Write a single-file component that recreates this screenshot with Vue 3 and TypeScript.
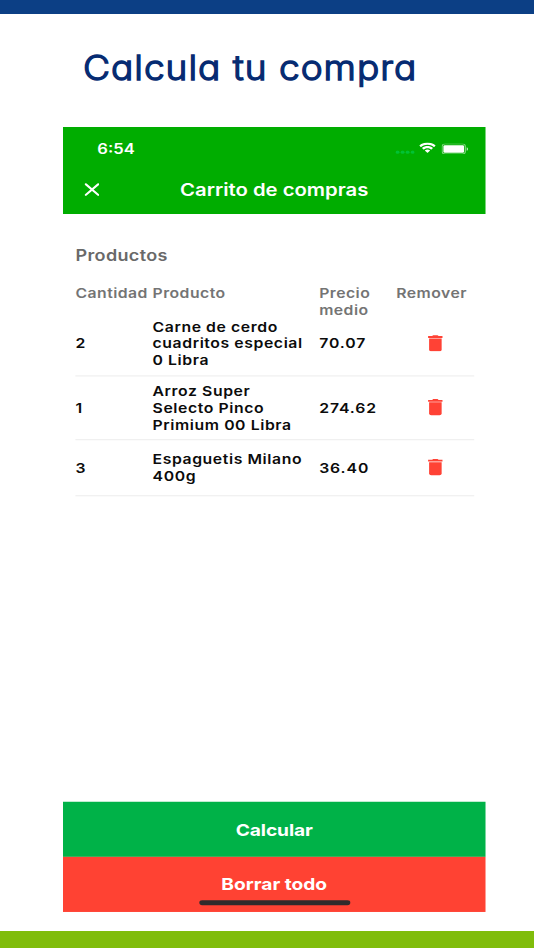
<script setup lang="ts">
interface Product {
  quantity: number
  lines: string[]
  price: string
  size: string
}

const products: Product[] = [
  { quantity: 2, lines: ['Carne de cerdo', 'cuadritos especial', '0 Libra'], price: '70.07', size: 'first' },
  { quantity: 1, lines: ['Arroz Super', 'Selecto Pinco', 'Primium 00 Libra'], price: '274.62', size: 'tall' },
  { quantity: 3, lines: ['Espaguetis Milano', '400g'], price: '36.40', size: 'short' },
]
</script>

<template>
  <main class="poster">
    <div class="band band-top"></div>
    <h1 class="headline"><span>Calcula tu compra</span></h1>

    <div class="frame">
      <section class="phone">
        <header class="header">
          <div class="status">
            <span class="clock">6:54</span>
            <div class="indicators">
              <svg class="dots" viewBox="0 0 18 4">
                <circle cx="2" cy="2" r="1.75" /><circle cx="6.6" cy="2" r="1.75" />
                <circle cx="11.2" cy="2" r="1.75" /><circle cx="15.8" cy="2" r="1.75" />
              </svg>
              <svg class="wifi" viewBox="0 0 16 12" preserveAspectRatio="none">
                <path d="M8 2.4c2.3 0 4.4.9 6 2.4.1.1.3.1.4 0l1.1-1.2c.2-.1.2-.3 0-.5-4.2-4-10.8-4-15 0-.2.2-.2.4 0 .5L1.6 4.8c.1.1.3.1.4 0C3.6 3.3 5.7 2.4 8 2.4Z" />
                <path d="M8 6.2c1.2 0 2.4.5 3.3 1.3.2.1.3.1.5 0L13 6.3c.1-.1.1-.3 0-.5-2.800-2.600-7.200-2.600-10 0-.1.2-.1.4 0 .5l1.200 1.200c.2.1.3.1.5 0C5.600 6.700 6.800 6.200 8 6.200Z" />
                <path d="M10.300 8.900c.2-.1.2-.3 0-.5-1.300-1.100-3.300-1.100-4.600 0-.2.2-.2.4 0 .5l2.100 2.100c.1.1.3.1.4 0Z" />
              </svg>
              <svg class="battery" viewBox="0 0 25 12" preserveAspectRatio="none">
                <rect x=".5" y=".5" width="21.500" height="11" rx="2.800" fill="none" stroke="#fff" stroke-opacity=".5" />
                <rect x="1.700" y="1.900" width="19.100" height="8.200" rx="1.300" fill="#fff" />
                <path d="M23.200 4v4c.8-.3 1.300-1.100 1.300-2s-.5-1.700-1.300-2Z" fill="#fff" fill-opacity=".7" />
              </svg>
            </div>
          </div>
          <div class="navbar">
            <svg class="close" viewBox="0 0 14 14" preserveAspectRatio="none">
              <path d="M1.300 1.300 12.700 12.700M12.700 1.300 1.300 12.700" />
            </svg>
            <h2 class="title">Carrito de compras</h2>
          </div>
        </header>

        <div class="content">
          <h3 class="section">Productos</h3>
          <div class="grid labels">
            <span>Cantidad</span><span>Producto</span><span>Precio<br />medio</span><span>Remover</span>
          </div>
          <div v-for="product in products" :key="product.price" class="grid row" :class="product.size">
            <span>{{ product.quantity }}</span>
            <div>
              <div v-for="line in product.lines" :key="line" class="line">{{ line }}</div>
            </div>
            <span class="price">{{ product.price }}</span>
            <svg class="trash" viewBox="0 0 14 18" preserveAspectRatio="none">
              <path d="M1 3.900h12V15.500a2 2 0 0 1-2 2H3a2 2 0 0 1-2-2Z" />
              <path d="M14 1.300v1.900H0v-1.900h3.900l1-.9h4.200l1 .9Z" />
            </svg>
          </div>
        </div>

        <footer class="actions">
          <button class="action calculate">Calcular</button>
          <button class="action clear">Borrar todo</button>
          <div class="home"></div>
        </footer>
      </section>
    </div>

    <div class="band band-bottom"></div>
  </main>
</template>

<style>
body {
  margin: 0;
  background: #fff;
}
</style>

<style scoped>
.poster {
  width: 534px;
  height: 950px;
  display: flex;
  flex-direction: column;
  overflow: hidden;
  font-family: Inter, "Liberation Sans", sans-serif;
  background: #fff;
}
.band {
  flex: none;
}
.band-top {
  height: 14.300px;
  background: #0c3f85;
}
.band-bottom {
  height: 16.700px;
  margin-top: 19.500px;
  background: #80bd0b;
}
.headline {
  box-sizing: border-box;
  flex: none;
  height: 112.400px;
  margin: 0;
  padding: 30px 0 0 82.500px;
  color: #062b72;
  font-size: 34px;
  line-height: 48px;
  font-weight: 300;
  font-feature-settings: "cv11";
  letter-spacing: .9px;
  white-space: nowrap;
  -webkit-text-stroke: 1.300px #062b72;
  stroke-linejoin: round;
}
.headline span {
  display: inline-block;
  transform: scaleX(1.09);
  transform-origin: left;
}
.frame {
  flex: none;
  width: 422.500px;
  height: 785px;
  margin-left: 63px;
}
/* The device screen is laid out in its own points and stretched to the frame. */
.phone {
  width: 375px;
  height: 812px;
  display: flex;
  flex-direction: column;
  transform: scale(1.1267, .9667);
  transform-origin: 0 0;
  background: #fff;
}
.header {
  flex: none;
  height: 90px;
  background: #00ad00;
  color: #fff;
}
.status {
  height: 44.500px;
  display: flex;
  justify-content: space-between;
  align-items: center;
  padding: 0 15.400px 0 30.500px;
  box-sizing: border-box;
}
.clock {
  margin-top: 1px;
  font-size: 14.700px;
  font-weight: 600;
}
.indicators {
  display: flex;
  align-items: center;
}
.dots {
  width: 17.500px;
  height: 4px;
  margin: 7px 4px 0 0;
  fill: #00c235;
}
.wifi {
  width: 15px;
  height: 11.500px;
  margin: -1px 4.500px 0 0;
  fill: #fff;
}
.battery {
  width: 24px;
  height: 11.500px;
}
.navbar {
  height: 41px;
  display: grid;
  grid-template-columns: 50px 1fr 50px;
  align-items: center;
}
.close {
  width: 13.500px;
  height: 13.500px;
  margin: 0 0 0 18.500px;
  fill: none;
  stroke: #fff;
  stroke-width: 2.100;
  stroke-linecap: round;
}
.title {
  margin: -.5px 0 0;
  text-align: center;
  font-size: 18px;
  font-weight: 600;
}
.content {
  flex: 1;
  padding: 32.700px 10.200px 0 11.100px;
}
.section {
  margin: 0;
  height: 40.500px;
  color: #696969;
  font-size: 16px;
  line-height: 20px;
  font-weight: 600;
  letter-spacing: .3px;
}
.grid {
  display: grid;
  grid-template-columns: 68.400px 147.900px 68.400px 1fr;
  font-size: 14px;
  line-height: 17.200px;
  font-weight: 600;
  letter-spacing: .52px;
  white-space: nowrap;
}
.labels {
  height: 34.500px;
  color: #747474;
  letter-spacing: .4px;
}
.row {
  box-sizing: border-box;
  align-items: center;
  border-bottom: 1px solid #ebebeb;
  color: #0b0b0b;
}
.price {
  letter-spacing: .8px;
}
.first {
  height: 59.900px;
  padding-bottom: 7.400px;
}
.tall {
  height: 66.200px;
}
.short {
  height: 57.900px;
}
.trash {
  width: 13px;
  height: 17.700px;
  margin-left: 28px;
  fill: #ff4235;
}
.actions {
  flex: none;
  position: relative;
}
.action {
  display: block;
  width: 100%;
  height: 56.600px;
  padding: 0;
  border: 0;
  color: #fff;
  font: 700 17px/56.600px Inter, "Liberation Sans", sans-serif;
}
.calculate {
  height: 57px;
  background: #00b248;
  letter-spacing: -.1px;
}
.clear {
  background: #ff4233;
}
.home {
  position: absolute;
  left: 120.500px;
  bottom: 7px;
  width: 134px;
  height: 5px;
  border-radius: 3px;
  background: #302b2c;
}
</style>
